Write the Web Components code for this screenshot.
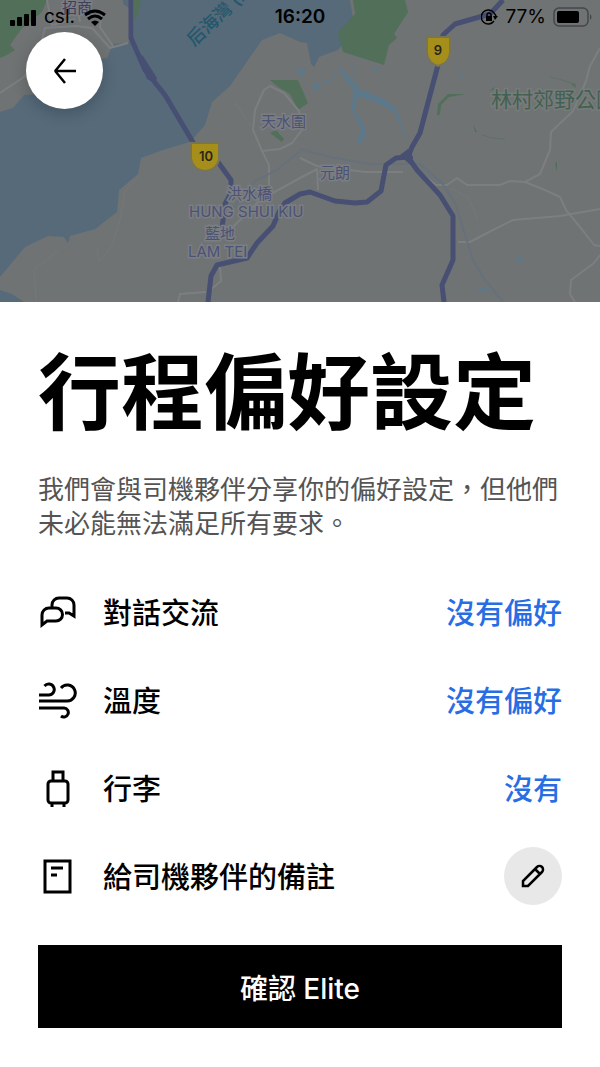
<!DOCTYPE html>
<html lang="zh-Hant">
<head>
  <meta charset="utf-8">
  <meta name="viewport" content="width=device-width, initial-scale=1">
  <title>行程偏好設定</title>
  <style>
    body {
      margin: 0;
      background: #fff;
      color: #000;
      font-family: Inter, "Noto Sans CJK TC", sans-serif;
    }
  </style>
</head>
<body>
  <trip-page>
    <map-header slot="header">
      <status-bar carrier="csl." time="16:20" battery="77%"></status-bar>
      <back-button></back-button>
    </map-header>
    <preference-sheet>
      <span slot="title">行程偏好設定</span>
      <span slot="intro">我們會與司機夥伴分享你的偏好設定，但他們未必能無法滿足所有要求。</span>
      <preference-row icon="chat" value="沒有偏好">對話交流</preference-row>
      <preference-row icon="wind" value="沒有偏好">溫度</preference-row>
      <preference-row icon="luggage" value="沒有">行李</preference-row>
      <preference-row icon="note">給司機夥伴的備註</preference-row>
      <confirm-button slot="action">確認 Elite</confirm-button>
    </preference-sheet>
  </trip-page>

  <script>
    const ICONS = {
      chat: `<path d="M14 15V12a7 7 0 0 1 7-7h8a7 7 0 0 1 7 7v11l-5-3h-4M4 32V22a7 7 0 0 1 7-7h7a6.500 6.500 0 0 1 0 13h-9Z"/>`,
      wind: `<path d="M1 14h9.500a5.500 5.500 0 1 0-4-9M1 20h28a8 8 0 1 0-6-13M1 27h25a4.500 4.500 0 1 1-3 8"/>`,
      luggage: `<path d="M15 12V3h10v9M13 12h14a3 3 0 0 1 3 3v16a3 3 0 0 1-3 3H13a3 3 0 0 1-3-3V15a3 3 0 0 1 3-3ZM14 34v4M26 34v4"/>`,
      note: `<path d="M7 4h25v31H7ZM13 11h12M13 18h6"/>`,
    };

    class TripPage extends HTMLElement {
      constructor() {
        super();
        this.attachShadow({ mode: 'open' });
        this.shadowRoot.innerHTML = `
          <style>
            :host {
              display: flex;
              flex-direction: column;
              min-height: 100vh;
            }
            ::slotted([slot="header"]) {
              flex: 1;
            }
          </style>
          <slot name="header"></slot>
          <slot></slot>
        `;
      }
    }

    class MapHeader extends HTMLElement {
      constructor() {
        super();
        this.attachShadow({ mode: 'open' });
        this.shadowRoot.innerHTML = `
          <style>
            :host {
              display: block;
              position: relative;
              overflow: hidden;
              min-height: 240px;
              background: #707374;
            }
            .map {
              position: absolute;
              inset: 0;
              width: 100%;
              height: 100%;
            }
            .content {
              position: relative;
            }
            .road {
              fill: none;
              stroke: #7c7f80;
              stroke-width: 2;
              stroke-linejoin: round;
            }
            .motorway {
              fill: none;
              stroke: #474f73;
              stroke-width: 5;
              stroke-linejoin: round;
            }
            .place {
              fill: #4b5276;
              stroke: #7b7e82;
              stroke-width: 3;
              paint-order: stroke;
              font-size: 15px;
            }
            .shield {
              fill: #a68e1b;
              stroke: #777558;
              stroke-width: 2;
            }
            .shield-text {
              fill: #282717;
              font-size: 13px;
              font-weight: 600;
              text-anchor: middle;
            }
          </style>
          <svg class="map" viewBox="0 0 600 302" preserveAspectRatio="xMidYMid slice">
            <!-- water -->
            <path fill="#566a7a" d="M134 0V36L128 43 113 44 107 58 90 61 60 96 40 94 24 95 13 108 0 112V277L25 247 48 236 64 237 68 243 70 236 95 229 117 212 119 190 138 174 141 158 163 150 190 142 205 125 212 102 230 86 255 50 262 40 280 33 300 42 307 43 311 64 314 67 319 57 338 50 355 30 350 0Z"/>
            <path fill="#566a7a" d="M0 290 12 294 24 302H0ZM123 0h6v8l-6-4Z"/>
            <g fill="#5c788b">
              <path d="M337 65 348 75 355 84 354 59 357 88 384 99 396 108 409 147 394 112 378 103 358 96 355 110 366 129 364 140 356 145 361 130 352 110 353 89 342 75Z"/>
              <path d="M314 83 322 84 313 93ZM324 82 329 79 330 83ZM330 76 334 74 337 78ZM300 70 306 68 302 78ZM372 70 377 66 379 71ZM454 69 466 78 461 77Z"/>
              <path d="M412 152 430 177 436 182 426 172ZM515 259 522 256 523 263ZM475 290 482 287 491 291ZM296 65 303 75 297 72Z"/>
            </g>
            <!-- parks -->
            <g fill="#526f5a">
              <path d="M0 0H47L42 12 22 28 10 45 15 50 5 56 0 58ZM353 0 355 14 338 32 343 52 384 65 389 45 397 38 394 34 408 12 405 0ZM134 0h7l-3 14-4 6Z"/>
              <path d="M270 80 298 80 308 103 298 110 290 94 278 87ZM270 133 276 130 284 139 282 142ZM437 116 438 104 448 94 466 94 449 97 441 105 440 114ZM490 91 494 87 496 89ZM571 84 575 83 576 88ZM555 163 557 162 557 172ZM473 124 477 132 475 132Z"/>
            </g>
            <path fill="none" stroke="#5f7165" d="M550 77 562 80 575 84M482 135 492 138 505 139"/>
            <!-- minor roads -->
            <path class="road" d="M0 93 24 77 37 58 45 28 76 26 92 28 110 48 128 43M47 0 52 25 75 19M102 10 100 27 113 46M76 0 80 22"/>
            <path class="road" d="M262 151 253 130 255 110 264 90 270 86 284 93 299 111 302 130 292 143 280 149ZM262 151 269 165 269 187M232 228 260 200 300 178 317 169 318 190"/>
            <path class="road" d="M300 158 317 166 365 172 403 172M417 170 436 185 447 185 457 178 467 185 500 185 510 181 525 182 540 174 550 150 551 132 573 111 586 81 590 66 600 48M525 182 545 190 560 197 566 210 584 232 594 245 600 246M458 242 470 242 491 231 513 220 560 216 600 209M600 255 594 263 571 280 570 294 575 302"/>
            <path class="road" d="M220 266 221 281 208 292M178 302 180 294 206 292"/>
            <path fill="none" stroke="#66717b" stroke-width="2" d="M300 149 330 157 370 164 395 164 420 164 442 183 456 205 465 235 473 260 485 280 503 302M225 218 255 181 277 170 300 151"/>
            <path fill="none" stroke="#757879" d="M97 247 99 262 112 246 120 220 125 191 139 176M60 249 34 270 36 302M235 102 251 126M450 188 468 197 478 220"/>
            <!-- motorways -->
            <path class="motorway" d="M131 0V38L145 70 165 95 194 144"/>
            <path fill="#474f73" d="M136 52 143 56 157 78 155 83 147 79Z"/>
            <path class="motorway" d="M218 162 231 180V193L225 204 222 228"/>
            <path class="motorway" d="M208 302 211 276 217 265 247 258 257 243 273 226 279 212 285 203 300 194 310 192 335 201 355 203 367 202 381 191 386 165 396 158 408 157 412 147 420 133 430 95 438 65 443 35 455 24 490 14 503 0"/>
            <path class="motorway" d="M408 157 417 170 440 195 453 216V260L442 285 444 302"/>
            <path fill="#474f73" d="M400 155 408 149 413 157 412 166 406 161Z"/>
            <path class="shield" d="M191 143H219V159Q217 170 205 171 193 170 191 159Z"/>
            <text class="shield-text" x="206" y="161">10</text>
            <path class="shield" d="M427 37H450V53Q449 63 438 66 428 63 427 53Z"/>
            <text class="shield-text" x="438" y="55">9</text>
            <!-- place names -->
            <g class="place">
              <text x="62" y="13" style="fill:#3b405d">招商</text>
              <text x="261" y="127">天水圍</text>
              <text x="320" y="178">元朗</text>
              <text x="227" y="199">洪水橋</text>
              <text x="189" y="217">HUNG SHUI KIU</text>
              <text x="205" y="239">藍地</text>
              <text x="188" y="257">LAM TEI</text>
            </g>
            <text x="491" y="107" fill="#426150" stroke="#787b7b" stroke-width="3" paint-order="stroke" font-size="21">林村郊野公園</text>
            <text transform="translate(194 47) rotate(-43)" fill="#25576a" font-size="18" font-weight="500">后海灣 (深圳灣)</text>
          </svg>
          <div class="content"><slot></slot></div>
        `;
      }
    }

    class StatusBar extends HTMLElement {
      constructor() {
        super();
        this.attachShadow({ mode: 'open' });
        this.shadowRoot.innerHTML = `
          <style>
            :host {
              display: grid;
              grid-template-columns: 1fr auto 1fr;
              align-items: center;
              height: 32px;
              padding: 0 8px;
              font-size: 19px;
              line-height: 34px;
            }
            div {
              display: flex;
              align-items: center;
              gap: 8px;
            }
            .power {
              justify-content: flex-end;
              gap: 7px;
            }
            .time {
              font-weight: 600;
            }
          </style>
          <div>
            <svg width="28" height="18" viewBox="0 0 28 18">
              <rect x="2" y="12" width="5" height="6" rx="1"/>
              <rect x="9" y="9" width="5" height="9" rx="1"/>
              <rect x="16" y="6" width="5" height="12" rx="1"/>
              <rect x="23" y="2" width="5" height="16" rx="1"/>
            </svg>
            <span class="carrier"></span>
            <svg width="24" height="18" viewBox="0 0 24 18">
              <g fill="none" stroke="#000" stroke-width="3">
                <path d="M2 7Q12 -1 22 7"/>
                <path d="M5 11Q12 5 19 11"/>
              </g>
              <path d="M8 14Q12 11 16 14L12 18Z"/>
            </svg>
          </div>
          <span class="time"></span>
          <div class="power">
            <svg width="17" height="16" viewBox="0 0 17 16">
              <path d="M13 4A7 7 0 1 0 13 12M13 4Q15 6 15 8" fill="none" stroke="#000" stroke-width="1.500"/>
              <path d="M12 7H17L14 11ZM5 7h6v5H5Z"/>
              <path d="M6 8V6a2 2 0 0 1 4 0v2" fill="none" stroke="#000" stroke-width="1.500"/>
            </svg>
            <span class="battery"></span>
            <svg width="39" height="20" viewBox="0 0 39 20">
              <rect x="1" y="1" width="34" height="18" rx="5" fill="none" stroke="#444749" stroke-width="1.500"/>
              <rect x="4" y="4" width="22" height="12" rx="2"/>
              <path d="M37 7q3 3 0 6Z" fill="#444749"/>
            </svg>
          </div>
        `;
      }

      connectedCallback() {
        ['carrier', 'time', 'battery'].forEach((name) => {
          this.shadowRoot.querySelector('.' + name).textContent = this.getAttribute(name);
        });
      }
    }

    class BackButton extends HTMLElement {
      constructor() {
        super();
        this.attachShadow({ mode: 'open' });
        this.shadowRoot.innerHTML = `
          <style>
            :host {
              display: block;
              padding: 0 26px;
            }
            button {
              display: flex;
              align-items: center;
              justify-content: center;
              width: 77px;
              height: 77px;
              padding: 0;
              border: 0;
              border-radius: 50%;
              background: #fff;
              color: #000;
              box-shadow: 0 5px 16px rgba(0, 0, 0, 0.2);
            }
          </style>
          <button type="button" aria-label="返回">
            <svg width="24" height="26" viewBox="0 0 24 26" fill="none" stroke="#000" stroke-width="2.500">
              <path d="M2 13H23M12 1 3 12Q2 13 3 14L12 25"/>
            </svg>
          </button>
        `;
      }
    }

    class PreferenceSheet extends HTMLElement {
      constructor() {
        super();
        this.attachShadow({ mode: 'open' });
        this.shadowRoot.innerHTML = `
          <style>
            :host {
              display: block;
              padding: 40px 38px 39px;
              background: #fff;
            }
            h1 {
              margin: 0 0 29px;
              font-size: 83px;
              font-weight: 700;
              line-height: 102px;
            }
            p {
              margin: 0 0 27px;
              color: #545454;
              font-size: 26px;
              line-height: 34px;
            }
            .action {
              margin-top: 25px;
            }
          </style>
          <h1><slot name="title"></slot></h1>
          <p><slot name="intro"></slot></p>
          <slot></slot>
          <div class="action"><slot name="action"></slot></div>
        `;
      }
    }

    class PreferenceRow extends HTMLElement {
      constructor() {
        super();
        this.attachShadow({ mode: 'open' });
        this.shadowRoot.innerHTML = `
          <style>
            :host {
              display: flex;
              align-items: center;
              gap: 26px;
              height: 88px;
              font-size: 29px;
              font-weight: 500;
              line-height: 40px;
            }
            .label {
              flex: 1;
            }
            .label,
            .value {
              padding-top: 3px;
            }
            button {
              padding: 0;
              border: 0;
              background: none;
              color: #276ee5;
              font: inherit;
            }
            .edit {
              display: flex;
              align-items: center;
              justify-content: center;
              width: 58px;
              height: 58px;
              border-radius: 50%;
              background: #e8e8e8;
            }
            svg {
              fill: none;
              stroke: #000;
            }
          </style>
          <svg class="icon" width="39" height="39" viewBox="0 0 39 39" stroke-width="3"></svg>
          <span class="label" id="label"><slot></slot></span>
          <button type="button" class="value" id="value" aria-labelledby="label value"></button>
        `;
        this._button = this.shadowRoot.querySelector('button');
      }

      connectedCallback() {
        this.shadowRoot.querySelector('.icon').innerHTML = ICONS[this.getAttribute('icon')];
        if (this.hasAttribute('value')) {
          this._button.textContent = this.getAttribute('value');
        } else {
          // rows with no value get the round edit button
          this._button.className = 'edit';
          this._button.innerHTML = `
            <svg width="24" height="24" viewBox="0 0 24 24" stroke-width="2.500">
              <path d="M2 22V17L16 3a3.500 3.500 0 0 1 5 5L7 22ZM14 5l5 5"/>
            </svg>
          `;
        }
      }
    }

    class ConfirmButton extends HTMLElement {
      constructor() {
        super();
        this.attachShadow({ mode: 'open' });
        this.shadowRoot.innerHTML = `
          <style>
            :host {
              display: block;
            }
            button {
              display: block;
              width: 100%;
              height: 83px;
              padding: 0;
              border: 0;
              background: #000;
              color: #fff;
              font: inherit;
              font-size: 28px;
              font-weight: 500;
            }
          </style>
          <button type="button"><slot></slot></button>
        `;
      }
    }

    customElements.define('trip-page', TripPage);
    customElements.define('map-header', MapHeader);
    customElements.define('status-bar', StatusBar);
    customElements.define('back-button', BackButton);
    customElements.define('preference-sheet', PreferenceSheet);
    customElements.define('preference-row', PreferenceRow);
    customElements.define('confirm-button', ConfirmButton);
  </script>
</body>
</html>
